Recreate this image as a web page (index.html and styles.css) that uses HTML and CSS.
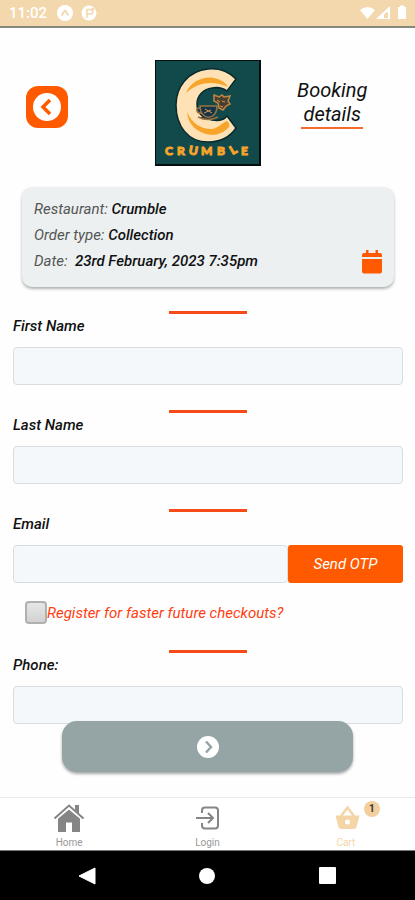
FILE: index.html
```html
<!DOCTYPE html>
<html lang="en">
<head>
<meta charset="utf-8">
<meta name="viewport" content="width=device-width, initial-scale=1">
<title>Booking details</title>
<link rel="stylesheet" href="styles.css">
</head>
<body>
<div class="status">
  <span class="clock">11:02</span>
  <svg width="16" height="16" viewBox="0 0 16 16" aria-hidden="true"><circle cx="8" cy="8" r="8" fill="#fff"/><path d="M4.500 10.500C6 9.500 7 5.500 8 5.500s2 4 3.500 5" fill="none" stroke="#f3d8ad" stroke-width="2"/></svg>
  <svg width="16" height="16" viewBox="0 0 16 16" aria-hidden="true"><circle cx="8" cy="8" r="7.500" fill="#fff"/><path d="M6 13V4.500h3.500a2 2 0 0 1 0 4.500H6" fill="none" stroke="#f3d8ad" stroke-width="1.500"/><circle cx="12" cy="4" r="1.500" fill="#f3d8ad"/></svg>
  <svg class="signals" width="48" height="16" viewBox="0 0 48 16" aria-hidden="true" fill="#fff"><path d="M1 5Q8.500-1 16 5L8.500 14z"/><path d="M31 1v13H17z"/><path d="M27 7.500h2V13h-4V9.500z" fill="#f3d8ad"/><path d="M39 2h2V0.500h4V2h2v12h-8z"/></svg>
</div>

<main class="screen">
  <header class="top">
    <button class="back" type="button" aria-label="Back">
      <svg width="42" height="42" viewBox="0 0 42 42"><circle cx="21" cy="21" r="14" fill="#fff"/><path d="M24 14L17 21l7 7" fill="none" stroke="#ff5a00" stroke-width="3.500"/></svg>
    </button>
    <svg class="logo" width="106" height="106" viewBox="0 0 106 106" role="img" aria-label="Crumble">
      <rect width="106" height="106" fill="#050d0d"/>
      <rect x="1" y="1" width="103" height="103" fill="#124a4b"/>
      <path d="M81 19C73 11 63 8 53 9C33 11 21 27 21 45C21 66 33 82 53 82C65 82 75 77 81 68L72 56C69 60 63 61 57 60C47 58 42 52 42 44C42 35 49 29 57 28C63 27 68 28 72 31z" fill="#fee1b5" stroke="#092a2d" stroke-width="1.500"/>
      <path d="M31 33C36 21 49 16 59 18Q69 20 73 27C60 21 44 21 31 33z" fill="#f7a42b"/>
      <path d="M32 52C37 63 45 69 57 69C64 68 66 63 72 61Q75 63 74 67C66 76 56 76 48 73C38 69 33 62 32 52z" fill="#f7a42b"/>
      <path d="M45 46h17c0 15-17 15-17 0zM45 48c-5-1-4 6 2 5M43 57q10 5 20 0" fill="#15354b" stroke="#9b713f" stroke-width="1.500"/>
      <path d="M59 35l5 2 3-2 2 2 6-1-2 5 2 3-4 2-3 4-4-2-1-5-4-2z" fill="#4a4032" stroke="#c08643" stroke-width="1.500"/>
      <path d="M62 40l3 2M67 41l3 1M65 46l3 1M50 49l7 4M49 53l7-3" stroke="#d9944b" fill="none"/>
      <g class="brand"><text x="10" y="95">C</text><text x="22" y="95">R</text><text x="34" y="95" transform="rotate(10 39 90)">U</text><text x="46" y="95">M</text><text x="62" y="95">B</text><text x="75" y="94" transform="rotate(-30 78 90)">L</text><text x="86" y="95">E</text></g>
    </svg>
    <h1 class="title">Booking<br>details</h1>
  </header>

  <section class="summary">
    <dl class="facts">
      <div><dt>Restaurant:</dt> <dd>Crumble</dd></div>
      <div><dt>Order type:</dt> <dd>Collection</dd></div>
      <div><dt>Date:&nbsp;</dt> <dd>23rd February, 2023 7:35pm</dd></div>
    </dl>
    <button class="calendar" type="button" aria-label="Change date">
      <svg width="22" height="24" viewBox="0 0 22 24" fill="#ff5a00"><path d="M1 7V5a2 2 0 0 1 2-2h2V0h2.500v3h7V0H17v3h2a2 2 0 0 1 2 2v2zM1 9h20v12.500a2 2 0 0 1-2 2H3a2 2 0 0 1-2-2z"/></svg>
    </button>
  </section>

  <form class="form">
    <div class="field"><label for="first">First Name</label><input class="box" id="first" type="text"></div>
    <div class="field"><label for="last">Last Name</label><input class="box" id="last" type="text"></div>
    <div class="field">
      <label for="email">Email</label>
      <div class="row"><input class="box" id="email" type="email"><button class="otp" type="button">Send OTP</button></div>
      <div class="register"><input id="register" type="checkbox"><label for="register">Register for faster future checkouts?</label></div>
    </div>
    <div class="field"><label for="phone">Phone:</label><input class="box" id="phone" type="tel"></div>
  </form>

  <button class="next" type="button" aria-label="Continue">
    <svg width="22" height="22" viewBox="0 0 22 22"><circle cx="11" cy="11" r="11" fill="#fff"/><path d="M9 5.500L14 11l-5 5.500" fill="none" stroke="#95a5a6" stroke-width="2.500"/></svg>
  </button>
</main>

<nav class="tabs">
  <a href="#home"><svg width="32" height="30" viewBox="0 0 32 30"><path d="M16 5.500L27 14v14h-8V18.500h-6V28H5V14z" fill="#858585"/><path d="M22 1h4v9l-4-3.500z" fill="#858585"/><path d="M2 16L16 4l14 12" fill="none" stroke="#fff" stroke-width="2"/><path d="M1.500 14.500L16 1.500l14.500 13" fill="none" stroke="#858585" stroke-width="2"/></svg><span>Home</span></a>
  <a href="#login"><svg width="32" height="30" viewBox="0 0 32 30" fill="none" stroke="#858585" stroke-width="2"><path d="M11 9V6.500a3 3 0 0 1 3-3h10a3 3 0 0 1 3 3v15a3 3 0 0 1-3 3H14a3 3 0 0 1-3-3V19M5 14h17M17 9l5 5-5 5"/></svg><span>Login</span></a>
  <a class="current" href="#cart"><svg width="32" height="30" viewBox="0 0 32 30"><path d="M11 12L17.500 3.500l6.500 8.500" fill="none" stroke="#f3d5a6" stroke-width="2.500"/><path d="M5.500 11.500h24l-3 11.500q-.5 2-3 2h-12q-2.500 0-3-2z" fill="#f3d5a6"/><circle cx="17.500" cy="18" r="2.500" fill="#fff"/></svg><b class="badge">1</b><span>Cart</span></a>
</nav>

<div class="system">
  <button type="button" aria-label="System back"><svg width="18" height="18" viewBox="0 0 18 18"><path d="M1 9L17 1v16z" fill="#fff" stroke="#fff" stroke-linejoin="round"/></svg></button>
  <button type="button" aria-label="System home"><svg width="18" height="18" viewBox="0 0 18 18"><circle cx="9" cy="9" r="8" fill="#fff"/></svg></button>
  <button type="button" aria-label="Recent apps"><svg width="18" height="18" viewBox="0 0 18 18"><rect x="1" y="0" width="17" height="17" rx="1" fill="#fff"/></svg></button>
</div>
</body>
</html>
```
FILE: styles.css
```css
* { box-sizing: border-box; }
body {
  margin: 0;
  min-height: 100vh;
  display: flex;
  flex-direction: column;
  background: #fefefe;
  color: #111;
  font-family: Roboto, "Liberation Sans", sans-serif;
  font-size: 15px;
}
button {
  padding: 0;
  border: 0;
  background: none;
  font: inherit;
  display: flex;
  align-items: center;
  justify-content: center;
}
svg { display: block; }

.status {
  height: 28px;
  padding: 0 8px 0 9px;
  display: flex;
  align-items: center;
  gap: 8px;
  background: #f3d8ad;
  border-bottom: 2px solid #85887a;
  color: #fff;
}
.clock { font-size: 15px; font-weight: 500; margin-right: 2px; }
.signals { margin-left: auto; }

.screen { flex: 1; position: relative; padding-top: 32px; }
.top {
  display: grid;
  grid-template-columns: 1fr 106px 1fr;
  align-items: center;
}
.back {
  width: 42px;
  height: 42px;
  margin: 0 0 12px 26px;
  border-radius: 12px;
  background: #ff5a00;
}
.brand {
  fill: #f7a42b;
  stroke: #f7a42b;
  stroke-width: 1px;
  font: 900 12px Lato, sans-serif;
}
.title {
  margin: 0 11px 20px 0;
  justify-self: center;
  padding: 0 6px;
  font-size: 20px;
  line-height: 24px;
  font-weight: 400;
  font-style: italic;
  text-align: center;
}
.title::after {
  content: "";
  display: block;
  width: 62px;
  height: 2px;
  margin: 1px auto 0;
  background: #f4692c;
}

.summary {
  margin: 21px 21px 0 22px;
  padding: 9px 11px 13px 12px;
  display: flex;
  align-items: flex-end;
  justify-content: space-between;
  border-radius: 10px;
  background: #ecf0f1;
  box-shadow: 0 2px 3px rgba(0, 0, 0, .3);
}
.facts { margin: 0; font-style: italic; line-height: 26px; }
.facts dt, .facts dd { display: inline; margin: 0; }
.facts dt { color: #555; }
.facts dd { font-weight: 500; color: #111; }

.form { padding: 24px 12px 40px 13px; }
.field::before {
  content: "";
  display: block;
  width: 78px;
  height: 3px;
  margin: 0 auto;
  background: #f64a1b;
}
.field { margin-bottom: 25px; }
.field > label {
  display: block;
  padding-bottom: 9px;
  line-height: 24px;
  font-style: italic;
  font-weight: 500;
}
.box {
  display: block;
  width: 100%;
  min-width: 0;
  height: 38px;
  padding: 0 10px;
  border: 1px solid #d9dddf;
  border-radius: 4px;
  background: #f4f8fb;
  font: inherit;
}
.row { display: flex; }
.row .box { flex: 1; }
.otp {
  width: 115px;
  height: 38px;
  flex: none;
  border-radius: 3px;
  background: #ff5a00;
  color: #fff;
  font-size: 15px;
  font-style: italic;
}
.register {
  margin: 18px 0 26px 12px;
  display: flex;
  align-items: center;
  color: #ff3f12;
  font-style: italic;
}
.register input {
  appearance: none;
  width: 22px;
  height: 23px;
  margin: 0;
  border: 2px solid #b0b0b0;
  border-radius: 4px;
  background: linear-gradient(#e6e6e6, #d2d2d2);
}
.next {
  position: absolute;
  left: 15%;
  right: 15%;
  bottom: 25px;
  height: 51px;
  border-radius: 15px;
  background: #95a5a6;
  box-shadow: 0 2px 3px rgba(0, 0, 0, .35);
}

.tabs {
  height: 54px;
  padding-top: 6px;
  display: grid;
  grid-template-columns: repeat(3, 1fr);
  background: #fff;
  border-top: 1px solid #e8e8e8;
  border-bottom: 1px solid #777;
}
.tabs a {
  position: relative;
  display: flex;
  flex-direction: column;
  align-items: center;
  color: #999;
  font-size: 10px;
  line-height: 18px;
  text-decoration: none;
}
.tabs .current { color: #f3d5a6; }
.badge {
  position: absolute;
  top: -3px;
  left: calc(50% + 18px);
  width: 16px;
  height: 16px;
  border-radius: 50%;
  background: #f3cf9e;
  color: #333;
  line-height: 16px;
  text-align: center;
}
.system {
  height: 49px;
  padding: 0 79px 0 78px;
  display: flex;
  align-items: center;
  justify-content: space-between;
  background: #000;
}
```
